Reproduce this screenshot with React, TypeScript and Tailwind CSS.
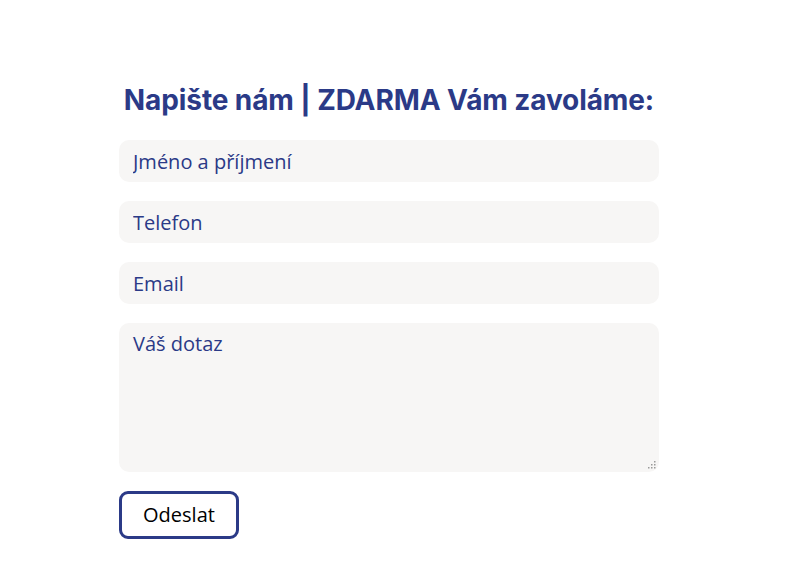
export default function App() {
  const field =
    "w-full h-[42px] rounded-[10px] bg-[#f7f6f5] px-[14px] text-[20px] text-[#2b3a87] placeholder:text-[#2b3a87] outline-none";
  return (
    <div className="min-h-[577px] bg-white pt-[82px] pl-[119px] font-['Open_Sans',sans-serif]">
      <form className="w-[540px] flex flex-col">
        <h2 className="text-center font-['Inter',sans-serif] font-bold text-[28px] leading-[36px] tracking-[-0.1px] text-[#2b3a87] mb-[22px]">
          Napište nám | ZDARMA Vám zavoláme:
        </h2>
        <input className={field} placeholder="Jméno a příjmení" />
        <input className={field + " mt-[19px]"} placeholder="Telefon" />
        <input className={field + " mt-[19px]"} placeholder="Email" />
        <div className="relative mt-[19px]">
          <textarea
            className="block w-full h-[149px] resize-none rounded-[10px] bg-[#f7f6f5] px-[14px] py-[6px] text-[20px] text-[#2b3a87] placeholder:text-[#2b3a87] outline-none"
            placeholder="Váš dotaz"
          />
          {/* resize grip */}
          <svg className="absolute right-[3px] bottom-[3px]" width="9" height="9" viewBox="0 0 9 9">
            <rect x="7" y="1" width="1.5" height="1.5" fill="#9a9a9a" />
            <rect x="4" y="4" width="1.5" height="1.5" fill="#9a9a9a" />
            <rect x="7" y="4" width="1.5" height="1.5" fill="#9a9a9a" />
            <rect x="1" y="7" width="1.5" height="1.5" fill="#9a9a9a" />
            <rect x="4" y="7" width="1.5" height="1.5" fill="#9a9a9a" />
            <rect x="7" y="7" width="1.5" height="1.5" fill="#9a9a9a" />
          </svg>
        </div>
        <div className="mt-[19px]">
          <button
            type="button"
            className="w-[120px] h-[48px] rounded-[9px] border-[3px] border-[#2b3a87] bg-white text-[20px] text-black"
          >
            Odeslat
          </button>
        </div>
      </form>
    </div>
  );
}
